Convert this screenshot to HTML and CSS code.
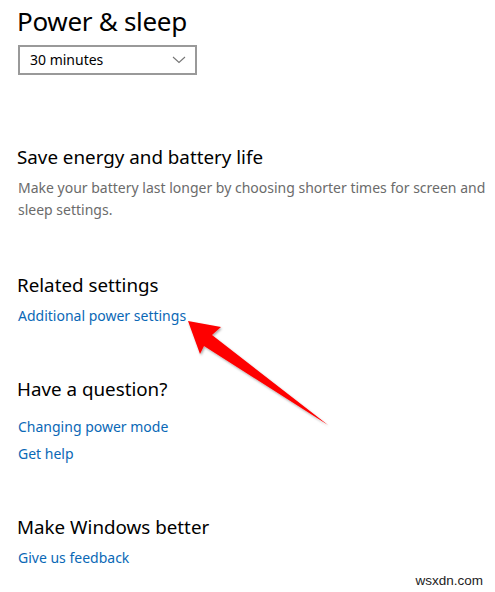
FILE: index.html
```html
<!DOCTYPE html>
<html>
<head>
<meta charset="utf-8">
<link rel="stylesheet" href="styles.css">
</head>
<body>
<div class="page">
  <h1 class="title">Power &amp; sleep</h1>
  <div class="select">
    <span class="select-value">30 minutes</span>
    <svg class="chev" width="14" height="8" viewBox="0 0 14 8"><path d="M1 1 L7 6.5 L13 1" fill="none" stroke="#767676" stroke-width="1.1"/></svg>
  </div>

  <h2 class="heading h-save">Save energy and battery life</h2>
  <p class="desc">Make your battery last longer by choosing shorter times for screen and<br>sleep settings.</p>

  <h2 class="heading h-related">Related settings</h2>
  <a class="link l-first">Additional power settings</a>

  <h2 class="heading h-question">Have a question?</h2>
  <a class="link l-q1">Changing power mode</a>
  <a class="link l-q2">Get help</a>

  <h2 class="heading h-better">Make Windows better</h2>
  <a class="link l-first">Give us feedback</a>

  <div class="watermark">wsxdn.com</div>
</div>
<svg class="arrow" width="495" height="592" viewBox="0 0 495 592">
  <defs>
    <filter id="sh" x="-20%" y="-20%" width="140%" height="140%">
      <feDropShadow dx="1" dy="1.5" stdDeviation="1.2" flood-color="#000" flood-opacity="0.35"/>
    </filter>
  </defs>
  <polygon points="188,321 221,327 212,335 328,425 204,346 200,354" fill="#fe0000" filter="url(#sh)"/>
</svg>
</body>
</html>
```
FILE: styles.css
```css
html, body {
  margin: 0;
  padding: 0;
  background: #ffffff;
}
body {
  width: 495px;
  height: 592px;
  overflow: hidden;
  position: relative;
  font-family: "Noto Sans", "Open Sans", sans-serif;
  color: #000;
}
.page {
  padding-left: 17px;
  display: flex;
  flex-direction: column;
  align-items: flex-start;
}
.title {
  margin: 3px 0 0 0;
  font-weight: 400;
  font-size: 26px;
  line-height: 36px;
  letter-spacing: -0.3px;
}
.select {
  margin: 6px 0 0 1px;
  width: 179px;
  height: 30px;
  box-sizing: border-box;
  border: 2px solid #999999;
  display: flex;
  align-items: center;
  justify-content: space-between;
  padding: 0 9px 0 10px;
}
.select-value {
  font-size: 14px;
  line-height: 20px;
}
.chev {
  display: block;
}
.heading {
  margin: 0;
  font-weight: 400;
  font-size: 18.8px;
  line-height: 28px;
}
.h-save { margin-top: 68px; }
.h-related { margin-top: 50px; }
.h-question { margin-top: 48px; }
.h-better { margin-top: 48px; }
.desc {
  margin: 6px 0 0 1px;
  font-size: 14px;
  line-height: 22px;
  color: #6b6b6b;
  white-space: nowrap;
}
.link {
  display: block;
  margin-left: 1px;
  font-size: 14px;
  line-height: 22px;
  color: #0a68b6;
  text-decoration: none;
}
.l-first { margin-top: 6px; }
.l-q1 { margin-top: 13px; }
.l-q2 { margin-top: 5px; }
.watermark {
  align-self: flex-end;
  margin: 4px 12px 0 0;
  font-family: "Liberation Sans", Arial, sans-serif;
  font-size: 13.5px;
  line-height: 16px;
  color: #222;
}
.arrow {
  position: absolute;
  left: 0;
  top: 0;
  pointer-events: none;
}
```
